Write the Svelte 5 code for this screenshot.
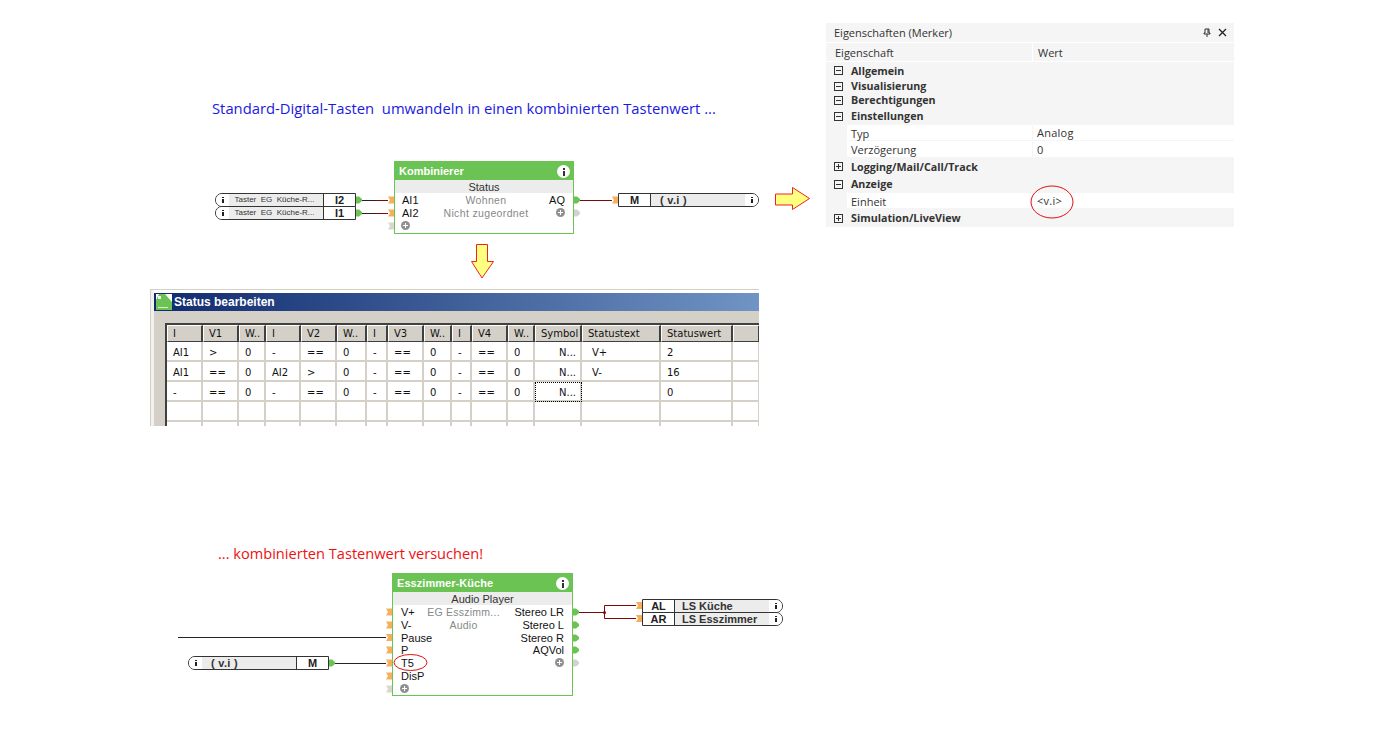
<script>
  const cols = [36, 36, 27, 35, 36, 30, 21, 36, 28, 20, 36, 27, 47, 79, 72, 27];
  const heads = ['I','V1','W..','I','V2','W..','I','V3','W..','I','V4','W..','Symbol','Statustext','Statuswert',''];
  const rows = [
    ['AI1','>','0','-','==','0','-','==','0','-','==','0','N...','V+','2',''],
    ['AI1','==','0','AI2','>','0','-','==','0','-','==','0','N...','V-','16',''],
    ['-','==','0','-','==','0','-','==','0','-','==','0','N...','','0',''],
    Array(16).fill(''),
    Array(16).fill('')
  ];
  const props = [
    { t: 'sec', icon: '-', name: 'Allgemein', h: 17 },
    { t: 'sec', icon: '-', name: 'Visualisierung', h: 14 },
    { t: 'sec', icon: '-', name: 'Berechtigungen', h: 14 },
    { t: 'sec', icon: '-', name: 'Einstellungen', h: 18 },
    { t: 'item', name: 'Typ', val: 'Analog', h: 16 },
    { t: 'item', name: 'Verzögerung', val: '0', h: 17 },
    { t: 'sec', icon: '+', name: 'Logging/Mail/Call/Track', h: 17 },
    { t: 'sec', icon: '-', name: 'Anzeige', h: 18 },
    { t: 'item', name: 'Einheit', val: '<v.i>', h: 16 },
    { t: 'sec', icon: '+', name: 'Simulation/LiveView', h: 18 }
  ];
  const inPorts = [[388,200],[388,213],[636,605.5],[636,618.5],[612,200],
    [386,612],[386,625],[386,637.5],[386,650],[386,663],[386,676]];
  const greyPorts = [[388,226],[386,689]];
  const outPins = [[356,200],[356,213],[574,200],[329,663],[573,612],[573,625],[573,638],[573,650]];
  const greyPins = [[574,213],[573,663]];
  const notch = (x, y) => `${x},${y-3.5} ${x+6},${y-3.5} ${x+6},${y+3.5} ${x},${y+3.5} ${x+2},${y}`;
  const pin = (x, y) => `M${x} ${y-3.5}h3l3 2.5v2l-3 2.5h-3z`;
</script>

{#snippet info(cls)}
  <span class="info {cls}"><span class="dot"></span><span class="stem"></span></span>
{/snippet}

{#snippet pill(dir, tag, label, kind = '')}
  <div class="pill {dir}">
    {#if dir === 'inl'}<span class="cap">{@render info('tiny')}</span><span class="lab {kind}">{label}</span><span class="tag">{tag}</span>{/if}
    {#if dir === 'out'}<span class="tag">{tag}</span><span class="lab {kind}">{label}</span><span class="cap">{@render info('tiny')}</span>{/if}
  </div>
{/snippet}

<div class="canvas">
  <svg class="wires" width="1373" height="742" viewBox="0 0 1373 742" aria-hidden="true">
    <g fill="none" stroke-width="1">
      <path class="w-dark" d="M362 200.500H376M362 213.500H376M335 663.500H386M178 637.500H386"/>
      <path class="w-red" d="M376 200.500H388M376 213.500H388M580 200.500H612M579 612.500H604.500M604.500 605.500V618.500M604.500 605.500H636M604.500 618.500H636"/>
    </g>
    <circle cx="604.500" cy="612.500" r="1.500" fill="#7c0a0a"/>
    {#each inPorts as [x, y]}<polygon points={notch(x, y)} fill="#f5b05c"/>{/each}
    {#each greyPorts as [x, y]}<polygon points={notch(x, y)} fill="#d8d8d0"/>{/each}
    {#each outPins as [x, y]}<path d={pin(x, y)} fill="#6bc353"/>{/each}
    {#each greyPins as [x, y]}<path d={pin(x, y)} fill="#d2d2ce"/>{/each}
    <polygon class="arrow" points="775.500,194 792.500,194 792.500,187.500 809.500,198.500 792.500,209.500 792.500,205 775.500,205"/>
    <polygon class="arrow" points="476.500,244.500 487.500,244.500 487.500,261.500 493.500,261.500 482,278 471.500,261.500 476.500,261.500"/>
    <ellipse class="ring" cx="1052" cy="202" rx="21" ry="16"/>
    <ellipse class="ring" cx="410.500" cy="662.500" rx="16.500" ry="8"/>
  </svg>

  <h2 class="headline blue">Standard-Digital-Tasten&nbsp; umwandeln in einen kombinierten Tastenwert ...</h2>
  <h2 class="headline red">... kombinierten Tastenwert versuchen!</h2>

  <div class="pillgroup g-taster">
    {@render pill('inl', 'I2', 'Taster  EG  Küche-R...', 'small')}
    {@render pill('inl', 'I1', 'Taster  EG  Küche-R...', 'small')}
  </div>
  <div class="pillgroup g-vi-out">{@render pill('out', 'M', '( v.i )', 'vi')}</div>
  <div class="pillgroup g-vi-in">{@render pill('inl', 'M', '( v.i )', 'vi')}</div>
  <div class="pillgroup g-ls">
    {@render pill('out', 'AL', 'LS Küche')}
    {@render pill('out', 'AR', 'LS Esszimmer')}
  </div>

  <section class="block b-komb">
    <header>Kombinierer {@render info('big')}</header>
    <div class="sub">Status</div>
    <div class="ports">
      <div class="col left"><span>AI1</span><span>AI2</span><span class="plus"></span></div>
      <div class="col mid"><span>Wohnen</span><span>Nicht zugeordnet</span></div>
      <div class="col right"><span>AQ</span><span class="plus"></span></div>
    </div>
  </section>

  <section class="block b-audio">
    <header>Esszimmer-Küche {@render info('big')}</header>
    <div class="sub">Audio Player</div>
    <div class="ports">
      <div class="col left"><span>V+</span><span>V-</span><span>Pause</span><span>P</span><span>T5</span><span>DisP</span><span class="plus"></span></div>
      <div class="col mid"><span>EG Esszimm...</span><span>Audio</span></div>
      <div class="col right"><span>Stereo LR</span><span>Stereo L</span><span>Stereo R</span><span>AQVol</span><span class="plus"></span></div>
    </div>
  </section>

  <section class="win">
    <div class="titlebar">
      <svg width="16" height="16" viewBox="0 0 16 16" aria-hidden="true">
        <rect width="16" height="16" fill="#fff"/>
        <polygon points="3,0 9,0 16,8 16,16 0,16 0,6" fill="#6bc353"/>
        <rect x="2" y="2" width="3" height="3" fill="#fff"/>
        <rect x="2" y="13" width="10" height="1" fill="#d5efcc"/>
      </svg>
      <span>Status bearbeiten</span>
    </div>
    <div class="gridwrap">
      <table>
        <colgroup>{#each cols as c}<col style:width="{c}px" />{/each}</colgroup>
        <thead><tr>{#each heads as h}<th>{h}</th>{/each}</tr></thead>
        <tbody>
          {#each rows as r, ri}
            <tr>
              {#each r as c, ci}
                <td class:focus={ri === 2 && ci === 12} class:sym={ci === 12} class:txt={ci === 13}>{c}</td>
              {/each}
            </tr>
          {/each}
        </tbody>
      </table>
    </div>
  </section>

  <aside class="props">
    <div class="ptitle">
      <span>Eigenschaften (Merker)</span>
      <svg width="26" height="10" viewBox="0 0 26 10" aria-hidden="true">
        <path d="M3 1h4v4h1v1H2V5h1zM5 6v3M6 1v4" fill="none" stroke="#333"/>
        <path d="M17 1l7 7M24 1l-7 7" fill="none" stroke="#222" stroke-width="1.300"/>
      </svg>
    </div>
    <div class="phead"><span class="pc1">Eigenschaft</span><span class="pc2">Wert</span></div>
    {#each props as p}
      <div class="prow {p.t}" style:height="{p.h}px">
        {#if p.t === 'sec'}
          <span class="tog" class:open={p.icon === '-'}></span><strong>{p.name}</strong>
        {:else}
          <span class="iname">{p.name}</span><span class="ival">{p.val}</span>
        {/if}
      </div>
    {/each}
  </aside>
</div>

<style>
  :global(body) { margin: 0; background: #fff; }
  .canvas { position: relative; width: 1373px; height: 742px; overflow: hidden; font-family: "Liberation Sans", Arial, sans-serif; color: #111; }
  .wires { position: absolute; left: 0; top: 0; z-index: 2; pointer-events: none; }
  .w-dark { stroke: #2a2222; }
  .w-red { stroke: #7c0a0a; }
  .arrow { fill: #ffff80; stroke: #ee2222; stroke-width: 1; }
  .ring { fill: none; stroke: #e01010; stroke-width: 1; }

  .headline { position: absolute; margin: 0; font: 400 14.800px/20px "Open Sans", sans-serif; white-space: nowrap; }
  .blue { left: 212px; top: 98px; color: #1a1ae0; }
  .red { left: 218px; top: 543px; color: #ee1111; font-size: 14.600px; }

  .pillgroup { position: absolute; width: 141px; display: flex; flex-direction: column; }
  .g-taster { left: 215px; top: 193px; }
  .g-vi-out { left: 618px; top: 193px; }
  .g-vi-in { left: 188px; top: 656px; }
  .g-ls { left: 642px; top: 599px; }
  .pill { display: flex; height: 12px; box-sizing: content-box; border: 1px solid #333; background: #fff; margin-bottom: -1px; align-items: stretch; }
  .pill .lab { flex: 1; background: #ececec; font-size: 11px; font-weight: 700; line-height: 13px; color: #333; padding-left: 7px; white-space: pre; overflow: hidden; }
  .pill .lab.small { font-size: 8px; font-weight: 400; padding-left: 0; padding-right: 3px; text-align: center; line-height: 11px; }
  .pill .lab.vi { padding-left: 9px; letter-spacing: .3px; }
  .pill .tag { width: 31px; flex: none; text-align: center; font-size: 11px; font-weight: 700; line-height: 13px; color: #222; }
  .pill.inl { border-top-left-radius: 7px; border-bottom-left-radius: 7px; }
  .pill.inl .tag { border-left: 1px solid #333; }
  .pill.out .tag { border-right: 1px solid #333; }
  .pill.out { border-top-right-radius: 7px; border-bottom-right-radius: 7px; }
  .pill .cap { width: 13px; flex: none; display: flex; align-items: center; justify-content: center; background: #fff; border-radius: inherit; }

  .info { display: inline-flex; flex-direction: column; align-items: center; justify-content: center; gap: 1px; }
  .info.tiny { width: 3px; height: 8px; }
  .info.tiny .dot { width: 2px; height: 1px; background: #222; }
  .info.tiny .stem { width: 2px; height: 4px; background: #222; }
  .info.big { position: absolute; right: 4px; top: 4px; width: 13px; height: 13px; border-radius: 50%; background: #fff; }
  .info.big .dot { width: 2px; height: 2px; background: #333; }
  .info.big .stem { width: 2px; height: 5px; background: #333; }

  .block { position: absolute; box-sizing: border-box; border: 1px solid #6bc353; background: #fff; font-size: 11px; }
  .block header { position: relative; height: 19px; margin: -1px -1px 0; padding-left: 5px; background: #6bc353; color: #fff; font-size: 11px; font-weight: 700; line-height: 21px; }
  .block .sub { height: 13px; background: #ececec; text-align: center; line-height: 15px; color: #333; }
  .b-komb { left: 394px; top: 161px; width: 180px; height: 73px; }
  .b-audio { left: 392px; top: 573px; width: 181px; height: 123px; }
  .b-audio header { letter-spacing: .05px; }
  .ports { display: flex; }
  .col { display: flex; flex-direction: column; }
  .col span { display: block; height: 12.800px; line-height: 15px; white-space: nowrap; }
  .b-komb .left { width: 34px; padding-left: 7px; box-sizing: border-box; }
  .b-komb .mid { flex: 1; align-items: center; color: #888; letter-spacing: .35px; padding-left: 4px; font-size: 10.500px; }
  .b-komb .right { width: 34px; padding-right: 8px; box-sizing: border-box; align-items: flex-end; }
  .b-audio .left { width: 33px; padding-left: 8px; box-sizing: border-box; }
  .b-audio .mid { width: 75px; align-items: center; color: #888; letter-spacing: .25px; font-size: 10.500px; }
  .b-audio .right { flex: 1; padding-right: 8px; align-items: flex-end; }
  .plus { position: relative; width: 9px; height: 9px !important; margin-top: 2px; border-radius: 50%; background: #909090; }
  .plus::before { content: ""; position: absolute; left: 2px; top: 4px; width: 5px; height: 1px; background: #fff; }
  .plus::after { content: ""; position: absolute; left: 4px; top: 2px; width: 1px; height: 5px; background: #fff; }
  .left .plus { left: -1px; }

  .win { position: absolute; left: 150px; top: 289px; width: 609px; height: 137px; box-sizing: border-box; overflow: hidden; background: #d4d0c8; border-top: 1px solid #d4d0c8; padding-top: 3px; padding-left: 4px; box-shadow: inset 1px 0 #d4d0c8; }
  .win::before { content: ""; position: absolute; left: 1px; top: 0; right: 0; height: 3px; background: #fff; }
  .win::after { content: ""; position: absolute; left: 1px; top: 0; bottom: 0; width: 3px; background: #f2f1ec; }
  .titlebar { display: flex; align-items: center; gap: 2px; height: 18px; padding-left: 2px; background: linear-gradient(90deg, #0f2a6e, #7094c4); color: #fff; font: 700 12px/18px "Liberation Sans", sans-serif; }
  .gridwrap { margin: 12px 0 0 11px; border-left: 2px solid #404040; border-top: 2px solid #404040; }
  table { border-collapse: separate; border-spacing: 0; table-layout: fixed; width: 593px; background: #fff; font: 400 10px/14px "DejaVu Sans", sans-serif; }
  th { height: 17px; padding: 1px 0 0 5px; box-sizing: border-box; background: #d4d0c8; font-weight: 400; text-align: left; color: #111; border-right: 2px solid #404040; border-bottom: 1px solid #404040; border-top: 1px solid #fff; border-left: 1px solid #fff; overflow: hidden; white-space: nowrap; }
  td { height: 20px; padding: 4px 0 0 6px; box-sizing: border-box; border-right: 2px solid #d4d0c8; border-bottom: 2px solid #d4d0c8; color: #111; overflow: hidden; white-space: nowrap; }
  td.sym { text-align: right; padding-right: 4px; }
  td.txt { padding-left: 10px; }
  td.focus { outline: 1px dotted #000; outline-offset: -1px; }

  .props { position: absolute; left: 826px; top: 23px; width: 408px; height: 204px; background: #f5f5f5; font: 400 11px/16px "Open Sans", sans-serif; color: #333; }
  .ptitle { display: flex; align-items: center; justify-content: space-between; height: 19px; padding: 0 6px 0 8px; }
  .phead { display: flex; height: 20px; line-height: 20px; border-bottom: 1px solid #fff; box-sizing: border-box; border-top: 1px solid #fff; }
  .pc1 { width: 207px; box-sizing: border-box; padding-left: 9px; border-right: 1px solid #fff; }
  .pc2 { padding-left: 5px; }
  .prow { display: flex; align-items: center; box-sizing: border-box; }
  .prow.sec strong { font-weight: 700; font-size: 10.700px; margin-left: 8px; color: #333; }
  .tog { position: relative; width: 7px; height: 7px; margin-left: 8px; border: 1px solid #333; flex: none; }
  .tog::before { content: ""; position: absolute; left: 1px; top: 3px; width: 5px; height: 1px; background: #333; }
  .tog:not(.open)::after { content: ""; position: absolute; left: 3px; top: 1px; width: 1px; height: 5px; background: #333; }
  .prow.item { margin-left: 21px; background: #fff; border-bottom: 1px solid #f5f5f5; align-items: center; padding-top: 1px; }
  .iname { width: 186px; box-sizing: border-box; padding-left: 4px; border-right: 1px solid #f5f5f5; line-height: 15px; }
  .ival { padding-left: 4px; letter-spacing: .25px; }
</style>
